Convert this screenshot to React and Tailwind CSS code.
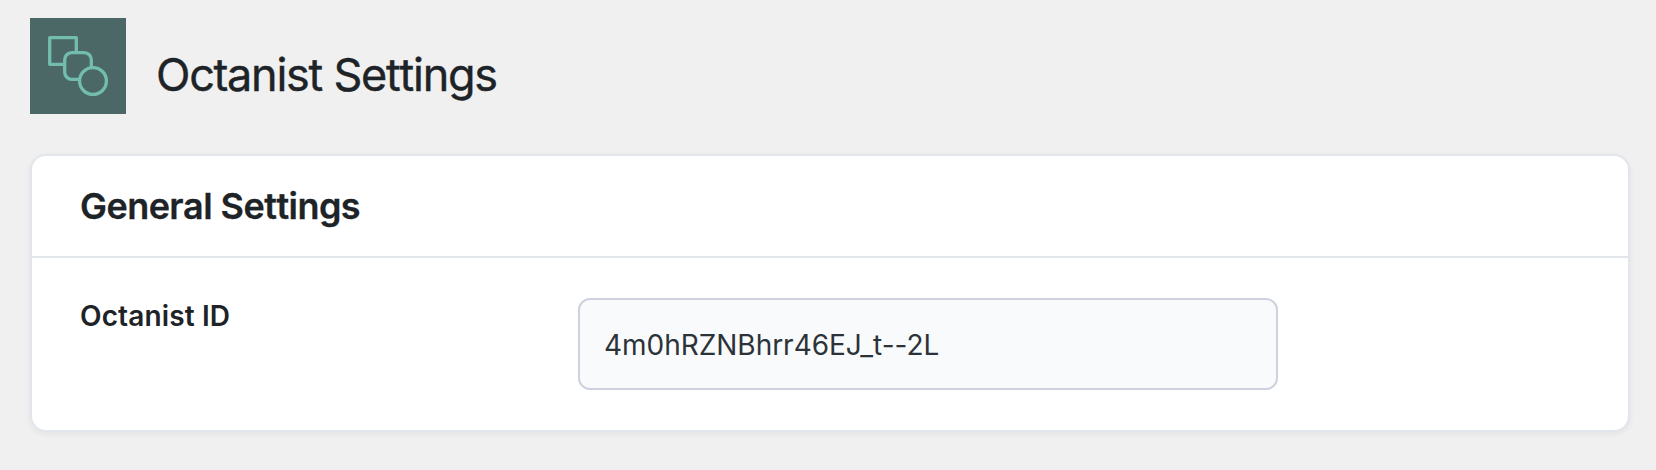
function Logo() {
  return (
    <svg className="size-24 shrink-0 bg-[#4b6766]" viewBox="0 0 96 96" fill="#4b6766" stroke="#72bdae" strokeWidth="3.3">
      <rect x="19.7" y="19.7" width="26.6" height="26.6" strokeLinejoin="round" />
      <rect x="34.7" y="34.7" width="26.6" height="26.6" rx="7" />
      <circle cx="63" cy="63" r="13.4" />
    </svg>
  );
}

export default function App() {
  return (
    <main className="h-[470px] w-[1656px] overflow-hidden bg-[#f0f0f0] px-[30px] pt-[18px] pr-[26px] font-['Inter',sans-serif] text-[#1d2327]">
      <header className="flex h-24 items-start gap-[30px]">
        <Logo />
        <h1 className="mt-[29px] text-[45px] leading-[56px] font-normal tracking-[-1.25px] whitespace-nowrap [font-kerning:none] [-webkit-text-stroke:0.4px_#1d2327]">Octanist Settings</h1>
      </header>
      <section className="mt-10 flex h-[278px] flex-col rounded-[16px] border-2 border-[#e2e6ec] bg-white shadow-[0_2px_6px_rgba(30,40,90,0.06)]">
        <div className="flex h-[102px] items-center border-b-2 border-[#e2e6ea] px-12">
          <h2 className="text-[36px] leading-[50px] font-semibold tracking-[-0.55px] whitespace-nowrap [font-kerning:none] [-webkit-text-stroke:0.3px_#1d2327]">General Settings</h2>
        </div>
        <div className="flex px-12 pt-10">
          <label htmlFor="octanist-id" className="w-[498px] text-[28px] leading-9 font-semibold tracking-[0.13px]">Octanist ID</label>
          <input
            id="octanist-id"
            type="text"
            defaultValue="4m0hRZNBhrr46EJ_t--2L"
            className="h-[92px] w-[700px] rounded-[12px] border-2 border-[#ced2de] bg-[#f9fafc] px-6 pt-px text-[28px] tracking-[-0.03px] text-[#2c3338] outline-none"
          />
        </div>
      </section>
    </main>
  );
}
